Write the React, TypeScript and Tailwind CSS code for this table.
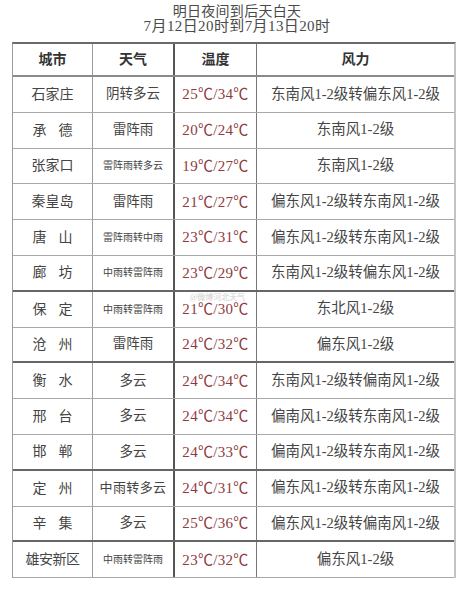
import React from 'react'

interface Row {
  city: string
  weather: string
  temp: string
  wind: string
  // darker rule under the row, as in the scan
  heavy?: boolean
}

const rows: Row[] = [
  { city: '石家庄', weather: '阴转多云', temp: '25℃/34℃', wind: '东南风1-2级转偏东风1-2级' },
  { city: '承德', weather: '雷阵雨', temp: '20℃/24℃', wind: '东南风1-2级' },
  { city: '张家口', weather: '雷阵雨转多云', temp: '19℃/27℃', wind: '东南风1-2级' },
  { city: '秦皇岛', weather: '雷阵雨', temp: '21℃/27℃', wind: '偏东风1-2级转东南风1-2级' },
  { city: '唐山', weather: '雷阵雨转中雨', temp: '23℃/31℃', wind: '偏东风1-2级转东南风1-2级' },
  { city: '廊坊', weather: '中雨转雷阵雨', temp: '23℃/29℃', wind: '东南风1-2级转偏东风1-2级', heavy: true },
  { city: '保定', weather: '中雨转雷阵雨', temp: '21℃/30℃', wind: '东北风1-2级' },
  { city: '沧州', weather: '雷阵雨', temp: '24℃/32℃', wind: '偏东风1-2级', heavy: true },
  { city: '衡水', weather: '多云', temp: '24℃/34℃', wind: '东南风1-2级转偏南风1-2级' },
  { city: '邢台', weather: '多云', temp: '24℃/34℃', wind: '偏南风1-2级转东南风1-2级' },
  { city: '邯郸', weather: '多云', temp: '24℃/33℃', wind: '偏南风1-2级转东南风1-2级', heavy: true },
  { city: '定州', weather: '中雨转多云', temp: '24℃/31℃', wind: '偏东风1-2级转东南风1-2级' },
  { city: '辛集', weather: '多云', temp: '25℃/36℃', wind: '偏东风1-2级转偏南风1-2级', heavy: true },
  { city: '雄安新区', weather: '中雨转雷阵雨', temp: '23℃/32℃', wind: '偏东风1-2级' },
]

const font = { fontFamily: '"Liberation Serif", "Noto Sans CJK SC", serif' }

function City({ name }: { name: string }) {
  if (name.length === 2) {
    return (
      <div className="flex w-[40px] justify-between">
        <span>{name[0]}</span>
        <span>{name[1]}</span>
      </div>
    )
  }
  return <span className={name.length > 3 ? 'tracking-[-0.5px]' : ''}>{name}</span>
}

function weatherSize(w: string) {
  if (w.length >= 6) return 'text-[10px]'
  if (w.length === 5) return 'text-[13px] tracking-[0.4px]'
  return 'text-[13.5px]'
}

export default function App() {
  return (
    <div className="relative h-[600px] w-[464px] bg-white text-[#454545]" style={font}>
      <div className="flex flex-col items-center pt-[4px] pl-[10px] leading-[15px] text-[#4a4a4a]">
        <div className="text-[14px] tracking-[0.3px]">明日夜间到后天白天</div>
        <div className="text-[15px] tracking-[0.4px]">7月12日20时到7月13日20时</div>
      </div>

      <div className="mt-[8px] ml-[12px] w-[444px] border-t-2 border-l border-r-2 border-t-[#6b6b6b] border-l-[#9a9a9a] border-r-[#c4c4c4]">
        <div className="grid h-[33px] grid-cols-[80px_82px_82px_1fr] border-b-2 border-[#8a8a8a] text-[14px] font-bold text-[#333]">
          <div className="flex items-center justify-center border-r border-[#9a9a9a]">城市</div>
          <div className="flex items-center justify-center border-r-2 border-[#555]">天气</div>
          <div className="flex items-center justify-center border-r border-[#777]">温度</div>
          <div className="flex items-center justify-center">风力</div>
        </div>

        {rows.map((r, i) => (
          <div
            key={i}
            className={
              'grid h-[35.8px] grid-cols-[80px_82px_82px_1fr] ' +
              (r.heavy ? 'border-b-2 border-[#666]' : 'border-b border-[#a8a8a8]')
            }
          >
            <div className="flex items-center justify-center border-r border-[#9a9a9a] text-[14px]">
              <City name={r.city} />
            </div>
            <div
              className={
                'flex items-center justify-center border-r-2 border-[#555] ' + weatherSize(r.weather)
              }
            >
              {r.weather}
            </div>
            <div className="flex items-center justify-center border-r border-[#777] text-[15px] tracking-[0.3px] text-[#8e3a3e]">
              {r.temp}
            </div>
            <div className="flex items-center justify-center text-[14.5px]">{r.wind}</div>
          </div>
        ))}
      </div>

      {/* faint watermark from the source */}
      <div className="absolute left-[190px] top-[292px] text-[8px] text-[#d0d0d0]">@微博河北天气</div>
    </div>
  )
}
